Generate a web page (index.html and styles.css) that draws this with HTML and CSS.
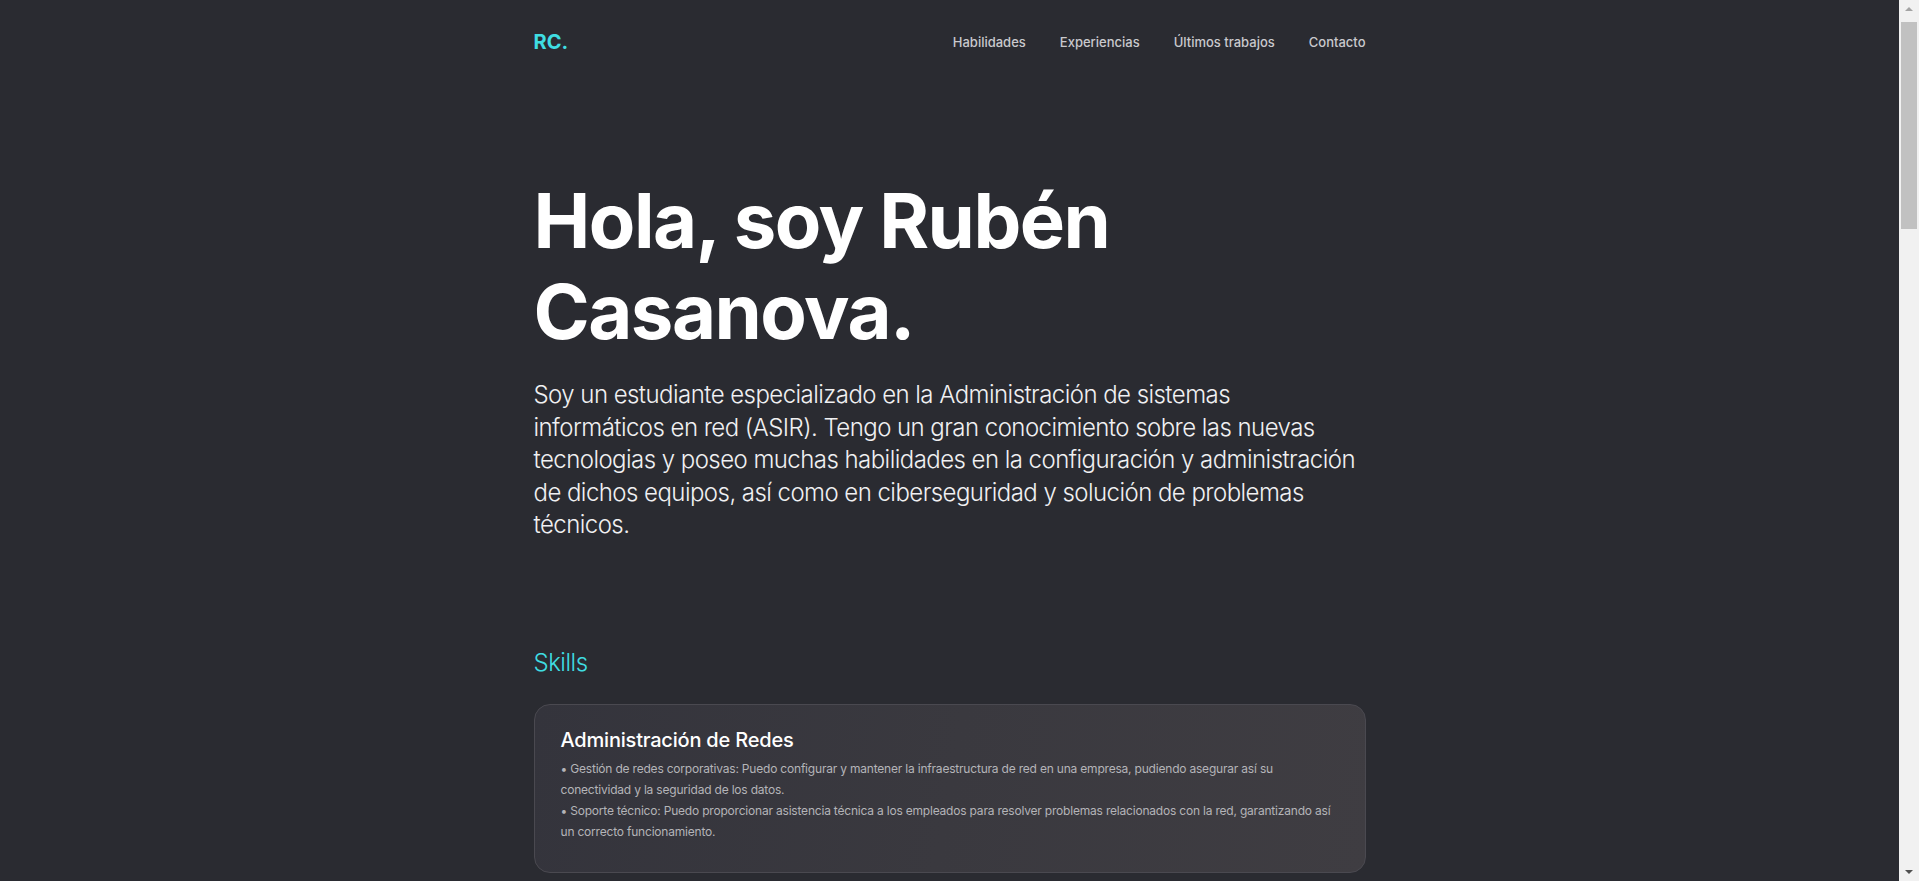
FILE: index.html
```html
<!DOCTYPE html>
<html lang="es">
<head>
<meta charset="utf-8">
<title>Rubén Casanova</title>
<link rel="stylesheet" href="styles.css">
</head>
<body>
<div class="app">
  <main class="page">
    <div class="container">
      <header class="header">
        <a class="logo" href="#">RC.</a>
        <nav class="nav">
          <a href="#">Habilidades</a>
          <a href="#">Experiencias</a>
          <a href="#">Últimos trabajos</a>
          <a href="#">Contacto</a>
        </nav>
      </header>
      <section class="hero">
        <h1>Hola, soy Rubén Casanova.</h1>
        <p class="intro">Soy un estudiante especializado en la Administración de sistemas informáticos en red (ASIR). Tengo un gran conocimiento sobre las nuevas tecnologias y poseo muchas habilidades en la configuración y administración de dichos equipos, así como en ciberseguridad y solución de problemas técnicos.</p>
      </section>
      <section class="skills">
        <h2 class="section-title">Skills</h2>
        <div class="card">
          <h3>Administración de Redes</h3>
          <p>• Gestión de redes corporativas: Puedo configurar y mantener la infraestructura de red en una empresa, pudiendo asegurar así su conectividad y la seguridad de los datos.<br>• Soporte técnico: Puedo proporcionar asistencia técnica a los empleados para resolver problemas relacionados con la red, garantizando así un correcto funcionamiento.</p>
        </div>
      </section>
    </div>
  </main>
  <div class="scrollbar">
    <span class="arrow up"></span>
    <div class="track"><div class="thumb"></div></div>
    <span class="arrow down"></span>
  </div>
</div>
</body>
</html>
```
FILE: styles.css
```css
* { box-sizing: border-box; }
html, body {
  margin: 0;
  height: 100%;
  overflow: hidden;
}
body {
  background: #2a2b31;
  color: #fff;
  font-family: Inter, "Noto Sans", "Liberation Sans", sans-serif;
}
.app {
  display: flex;
  height: 100vh;
}
.page {
  flex: 1;
  overflow: hidden;
}
.container {
  width: 832px;
  margin: 0 auto;
}
.header {
  display: flex;
  justify-content: space-between;
  align-items: center;
  padding-top: 30px;
  height: 54px;
}
.logo {
  color: #3fdde2;
  font-weight: 700;
  font-size: 20px;
  line-height: 24px;
  text-decoration: none;
}
.nav {
  display: flex;
  gap: 34px;
}
.nav a {
  color: #c9c9cd;
  font-size: 13px;
  font-weight: 500;
  text-decoration: none;
}
.hero {
  padding-top: 121px;
}
h1 {
  margin: 0 0 22px;
  font-size: 76px;
  line-height: 1.2;
  font-weight: 700;
  letter-spacing: -1.5px;
}
.intro {
  margin: 0;
  font-size: 24px;
  font-weight: 300;
  line-height: 32.4px;
  letter-spacing: -0.55px;
  color: #f0f0f2;
}
.skills {
  padding-top: 106px;
}
.section-title {
  margin: 0 0 25px;
  font-size: 24px;
  line-height: 32px;
  font-weight: 300;
  letter-spacing: -0.5px;
  color: #3fdde2;
}
.card {
  border: 1px solid #4a4950;
  border-radius: 16px;
  background: linear-gradient(100deg, #34343c 0%, #3a393f 50%, #3f3d42 100%);
  padding: 23px 26px 30px;
}
.card h3 {
  margin: 0 0 6px;
  font-size: 20px;
  line-height: 24px;
  font-weight: 500;
  letter-spacing: -0.2px;
}
.card p {
  margin: 0;
  font-size: 12px;
  line-height: 21px;
  letter-spacing: -0.2px;
  color: #b4b4b8;
}
.scrollbar {
  width: 20px;
  background: #f1f1f1;
  display: flex;
  flex-direction: column;
  align-items: center;
}
.track {
  flex: 1;
  width: 100%;
  padding: 4px 2px;
}
.thumb {
  width: 100%;
  height: 207px;
  background: #c1c1c1;
}
.arrow {
  width: 0;
  height: 0;
  border-left: 4px solid transparent;
  border-right: 4px solid transparent;
  margin: 7px 0;
}
.arrow.up { border-bottom: 4px solid #a3a3a3; }
.arrow.down { border-top: 4px solid #505050; }
```
